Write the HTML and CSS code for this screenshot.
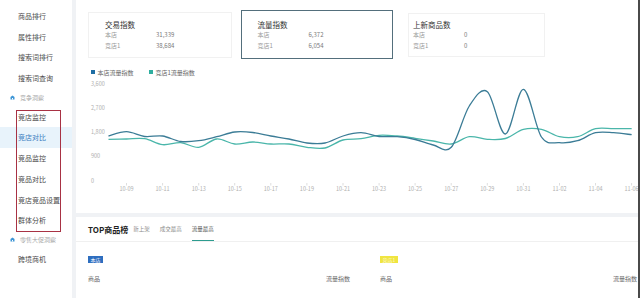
FILE: index.html
```html
<!DOCTYPE html>
<html lang="zh">
<head>
    <meta charset="UTF-8">
    <meta name="viewport" content="width=device-width, initial-scale=1.0">
    <title>竞店对比</title>
    <link rel="stylesheet" href="styles.css">
</head>
<body>
    <div class="page">
        <aside class="sidebar">
            <a class="nav-item">商品排行</a>
            <a class="nav-item">属性排行</a>
            <a class="nav-item">搜索词排行</a>
            <a class="nav-item">搜索词查询</a>
            <div class="nav-group">
                <svg class="group-icon" viewBox="0 0 10 10"><path d="M1 4 L5 1 L9 4 V9 H1 Z" fill="#3d95d6"/><rect x="4" y="6" width="2" height="3" fill="#fff"/></svg>
                竞争洞察
            </div>
            <div class="marked">
                <a class="nav-item">竞店监控</a>
                <a class="nav-item active">竞店对比</a>
                <a class="nav-item">竞品监控</a>
                <a class="nav-item">竞品对比</a>
                <a class="nav-item">竞店竞品设置</a>
                <a class="nav-item">群体分析</a>
            </div>
            <div class="nav-group">
                <svg class="group-icon" viewBox="0 0 10 10"><path d="M1 4 L5 1 L9 4 V9 H1 Z" fill="#3d95d6"/><rect x="4" y="6" width="2" height="3" fill="#fff"/></svg>
                零售大促洞察
            </div>
            <a class="nav-item">跨境商机</a>
        </aside>

        <main class="main">
            <section class="card trend-card">
                <div class="metrics">
                    <div class="metric metric-trade">
                        <h4>交易指数</h4>
                        <dl>
                            <dt>本店</dt><dd>31,339</dd>
                            <dt>竞店1</dt><dd>38,684</dd>
                        </dl>
                    </div>
                    <div class="metric metric-flow">
                        <h4>流量指数</h4>
                        <dl>
                            <dt>本店</dt><dd>6,372</dd>
                            <dt>竞店1</dt><dd>6,054</dd>
                        </dl>
                    </div>
                    <div class="metric metric-new">
                        <h4>上新商品数</h4>
                        <dl>
                            <dt>本店</dt><dd>0</dd>
                            <dt>竞店1</dt><dd>0</dd>
                        </dl>
                    </div>
                </div>

                <div class="legend">
                    <span class="legend-item"><i class="dot dot-own"></i>本店流量指数</span>
                    <span class="legend-item"><i class="dot dot-rival"></i>竞店1流量指数</span>
                </div>

                <svg class="chart" width="562" height="130" viewBox="76 77 562 130">
                    <g class="y-labels">
                        <text x="91" y="84">3,600</text>
                        <text x="91" y="108.3">2,700</text>
                        <text x="91" y="132.5">1,800</text>
                        <text x="91" y="156.8">900</text>
                        <text x="91" y="181">0</text>
                    </g>
                    <path class="ticks" d="M126.5 183v2.5M162.6 183v2.5M198.7 183v2.5M234.7 183v2.5M270.8 183v2.5M306.9 183v2.5M343 183v2.5M379.1 183v2.5M415.1 183v2.5M451.2 183v2.5M487.3 183v2.5M523.4 183v2.5M559.5 183v2.5M595.5 183v2.5M631.6 183v2.5"/>
                    <g class="x-labels">
                        <text x="126.5" y="189">10-09</text>
                        <text x="162.6" y="189">10-11</text>
                        <text x="198.7" y="189">10-13</text>
                        <text x="234.7" y="189">10-15</text>
                        <text x="270.8" y="189">10-17</text>
                        <text x="306.9" y="189">10-19</text>
                        <text x="343" y="189">10-21</text>
                        <text x="379.1" y="189">10-23</text>
                        <text x="415.1" y="189">10-25</text>
                        <text x="451.2" y="189">10-27</text>
                        <text x="487.3" y="189">10-29</text>
                        <text x="523.4" y="189">10-31</text>
                        <text x="559.5" y="189">11-02</text>
                        <text x="595.5" y="189">11-04</text>
                        <text x="631.6" y="189">11-06</text>
                    </g>
                    <path id="lineRival" class="line line-rival" d=""/>
                    <path id="lineOwn" class="line line-own" d=""/>
                </svg>
            </section>

            <section class="card top-card">
                <div class="top-head">
                    <h3>TOP商品榜</h3>
                    <nav class="tabs">
                        <a class="tab">新上架</a>
                        <a class="tab">成交最高</a>
                        <a class="tab active">流量最高</a>
                    </nav>
                </div>
                <div class="top-body">
                    <div class="shop-col">
                        <span class="badge badge-own">本店</span>
                        <div class="col-head"><span>商品</span><span>流量指数</span></div>
                    </div>
                    <div class="shop-col">
                        <span class="badge badge-rival">竞店1</span>
                        <div class="col-head"><span>商品</span><span>流量指数</span></div>
                    </div>
                </div>
            </section>
        </main>
    </div>

    <script src="chart.js"></script>
</body>
</html>
```

FILE: styles.css
```css
* {
    box-sizing: border-box;
    margin: 0;
    padding: 0;
}

body {
    font-family: "Noto Sans CJK SC", "Noto Sans", sans-serif;
    background: #f0f2f5;
    color: #333;
    width: 640px;
    height: 298px;
    overflow: hidden;
}

.page {
    display: flex;
    height: 298px;
    border-right: 2px solid #4a4a4a;
}

/* sidebar */
.sidebar {
    width: 72px;
    flex-shrink: 0;
    background: #fff;
    padding-top: 6px;
}

.nav-item {
    display: block;
    height: 20.7px;
    line-height: 20.7px;
    padding-left: 18px;
    font-size: 7px;
    color: #4a4a4a;
    white-space: nowrap;
}

.nav-item.active {
    background: #e8f3fb;
    color: #3a7cc0;
}

.nav-group {
    display: flex;
    align-items: center;
    height: 18px;
    padding-left: 10px;
    gap: 5px;
    font-size: 6px;
    color: #a8a8a8;
    white-space: nowrap;
}

.group-icon {
    width: 5px;
    height: 5px;
}

.marked {
    position: relative;
}

.marked::after {
    content: "";
    position: absolute;
    left: 16px;
    width: 43px;
    top: 3px;
    bottom: -1px;
    border: 1px solid #a83244;
}

/* main */
.main {
    flex: 1;
    display: flex;
    flex-direction: column;
    gap: 4px;
    padding-left: 4px;
}

.card {
    background: #fff;
}

.trend-card {
    height: 213px;
    padding-top: 10px;
}

.metrics {
    display: flex;
    align-items: center;
    height: 49px;
    padding-left: 12px;
}

.metric {
    display: flex;
    flex-direction: column;
    justify-content: center;
    padding-top: 2px;
    border: 1px solid #f1f1f1;
}

.metric-trade {
    width: 144px;
    height: 46px;
    padding-left: 16px;
}

.metric-flow {
    width: 152px;
    height: 49px;
    margin-left: 9px;
    padding-left: 15.5px;
    border: 1.5px solid #536f7c;
}

.metric-new {
    width: 137px;
    height: 44px;
    margin-left: 15px;
    padding-left: 4px;
}

.metric h4 {
    font-size: 7.5px;
    font-weight: normal;
    color: #333;
    line-height: 10px;
}

.metric dl {
    display: grid;
    grid-template-columns: 51px 1fr;
    font-size: 6px;
    line-height: 10.5px;
}

.metric dt {
    color: #9a9a9a;
}

.metric dd {
    color: #777;
}

.legend {
    display: flex;
    align-items: center;
    height: 8px;
    margin-top: 9px;
    padding-left: 15px;
    font-size: 6px;
    color: #666;
}

.legend-item {
    display: flex;
    align-items: center;
    gap: 2.5px;
    width: 58px;
    white-space: nowrap;
}

.dot {
    width: 4px;
    height: 4px;
}

.dot-own {
    background: #1f6ea3;
}

.dot-rival {
    background: #2fae9f;
}

.chart {
    display: block;
    margin-top: 1px;
}

.chart text {
    font-size: 5.5px;
    fill: #b0b0b0;
    dominant-baseline: middle;
}

.x-labels text {
    text-anchor: middle;
}

.ticks {
    stroke: #c8c8c8;
    stroke-width: 0.6;
}

.line {
    fill: none;
    stroke-width: 1.3;
    stroke-linejoin: round;
}

.line-own {
    stroke: #3b7c96;
}

.line-rival {
    stroke: #4ab6aa;
}

/* top list */
.top-card {
    flex: 1;
}

.top-head {
    display: flex;
    align-items: stretch;
    height: 25px;
    padding-left: 12px;
    border-bottom: 1px solid #f0f0f0;
}

.top-head h3 {
    align-self: center;
    font-size: 8px;
    font-weight: bold;
    color: #222;
}

.tabs {
    display: flex;
    gap: 10px;
    margin-left: 5px;
}

.tab {
    display: flex;
    align-items: center;
    font-size: 5.5px;
    color: #8a8a8a;
    border-bottom: 1.5px solid transparent;
}

.tab.active {
    color: #555;
    border-bottom-color: #2d9c8f;
}

.top-body {
    display: grid;
    grid-template-columns: 262px 1fr;
    column-gap: 30px;
    padding: 14px 1px 0 12px;
}

.shop-col {
    display: flex;
    flex-direction: column;
    align-items: flex-start;
}

.badge {
    height: 7px;
    line-height: 7px;
    padding: 0 2.5px;
    font-size: 5px;
}

.badge-own {
    background: #2e6ebf;
    color: #fff;
}

.badge-rival {
    background: #f0e540;
    color: #fdf9d8;
}

.col-head {
    display: flex;
    justify-content: space-between;
    align-self: stretch;
    margin-top: 12px;
    font-size: 6px;
    line-height: 8px;
    color: #666;
}
```

FILE: chart.js
```js
// 流量指数 daily points, already in chart pixel y (10-08 .. 11-06)
const x0 = 108.5;
const dx = 18.04;

const own = [136, 131.7, 136.5, 136, 141.5, 140.7, 136.7, 132, 132.5, 136, 139, 143, 143, 136, 132.7,
    136.5, 136.7, 139.5, 145, 147.3, 106, 91.7, 134, 89.3, 137, 142.7, 140.7, 132.7, 132.7, 134.7];
const rival = [139.3, 139, 138.7, 144.7, 142.7, 147.3, 139, 144, 142, 144, 144, 147.3, 148, 140, 138.7,
    135.3, 136, 138.3, 141, 144, 136.7, 139.3, 138.5, 129.3, 129.3, 136.7, 136.7, 128.7, 128.7, 128.7];

function smoothPath(ys) {
    const pts = ys.map((y, i) => [x0 + dx * i, y]);
    let d = 'M' + pts[0][0] + ',' + pts[0][1];
    for (let i = 0; i < pts.length - 1; i++) {
        const p0 = pts[i - 1] || pts[i];
        const p1 = pts[i];
        const p2 = pts[i + 1];
        const p3 = pts[i + 2] || p2;
        const c1x = p1[0] + (p2[0] - p0[0]) / 6;
        const c1y = p1[1] + (p2[1] - p0[1]) / 6;
        const c2x = p2[0] - (p3[0] - p1[0]) / 6;
        const c2y = p2[1] - (p3[1] - p1[1]) / 6;
        d += ' C' + c1x.toFixed(2) + ',' + c1y.toFixed(2) + ' ' + c2x.toFixed(2) + ',' + c2y.toFixed(2) + ' ' + p2[0].toFixed(2) + ',' + p2[1];
    }
    return d;
}

document.getElementById('lineOwn').setAttribute('d', smoothPath(own));
document.getElementById('lineRival').setAttribute('d', smoothPath(rival));
```
